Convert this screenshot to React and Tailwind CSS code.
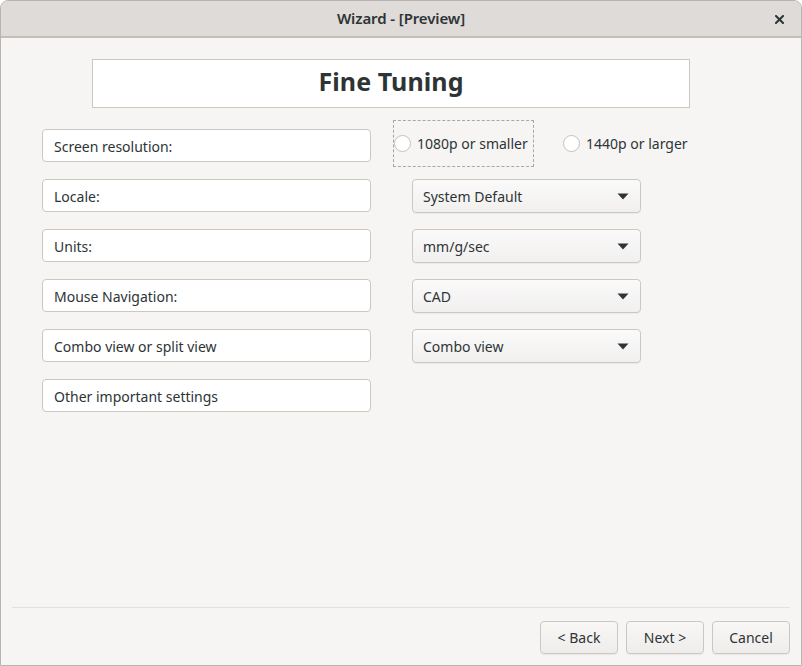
import React from "react";

const font = { fontFamily: '"Noto Sans", "Open Sans", sans-serif' };

function Label({ children }) {
  return (
    <div className="w-[329px] h-[33px] shrink-0 flex items-center pl-[11px] pt-[2px] bg-white border border-[#cdc7c2] rounded-[4px] text-[14px] text-[#2e3436]">
      {children}
    </div>
  );
}

function Combo({ children }) {
  return (
    <div className="ml-[41px] w-[229px] h-[34px] flex items-center justify-between pl-[10px] pr-[11px] rounded-[4px] border border-[#cdc7c2] bg-gradient-to-b from-[#fbfafa] to-[#f1f0ef] text-[14px] text-[#2e3436] shadow-[0_1px_0_rgba(0,0,0,0.04)]">
      <span>{children}</span>
      <svg width="12" height="7" viewBox="0 0 12 7">
        <path d="M0.5 0.5 L11.5 0.5 L6 6.5 Z" fill="#2e3436" />
      </svg>
    </div>
  );
}

function Radio() {
  return <span className="w-[17px] h-[17px] rounded-full bg-white border border-[#c4c0bc] shrink-0" />;
}

function Button({ children }) {
  return (
    <div className="w-[78px] h-[33px] flex items-center justify-center rounded-[4px] border border-[#cdc7c2] bg-gradient-to-b from-[#f8f7f6] to-[#eeedec] text-[14px] text-[#2e3436] shadow-[0_1px_0_rgba(0,0,0,0.05)]">
      {children}
    </div>
  );
}

export default function App() {
  return (
    <div style={font} className="w-[802px] h-[666px] flex flex-col bg-[#f6f5f4] border border-[#b7b4b1] rounded-t-[8px] overflow-hidden text-[#2e3436]">
      <div className="h-[37px] shrink-0 flex items-center justify-center relative bg-[#dedbd8] border-b-2 border-[#c2bfbb]">
        <span className="text-[15px] font-semibold tracking-[-0.1px] mt-[-1px]">Wizard - [Preview]</span>
        <svg className="absolute right-[17px] top-[14px]" width="9" height="9" viewBox="0 0 9 9">
          <path d="M1 1 L8 8 M8 1 L1 8" stroke="#2e3436" strokeWidth="2" strokeLinecap="square" />
        </svg>
      </div>
      <div className="flex-1 flex flex-col">
        <div className="mt-[21px] ml-[91px] w-[598px] h-[49px] bg-white border border-[#cdc7c2] flex items-center justify-center pb-[4px]">
          <span className="text-[25px] font-bold tracking-[0.1px]">Fine Tuning</span>
        </div>
        <div className="mt-[21px] ml-[41px] flex flex-col gap-[17px]">
          <div className="flex items-start h-[33px]">
            <Label>Screen resolution:</Label>
            <div className="ml-[22px] -mt-[9px] flex items-center">
              <div className="w-[141px] h-[47px] border border-dashed border-[#a9a6a3] flex items-center">
                <Radio />
                <span className="ml-[6px] text-[14px]">1080p or smaller</span>
              </div>
              <div className="ml-[29px] flex items-center">
                <Radio />
                <span className="ml-[6px] text-[14px]">1440p or larger</span>
              </div>
            </div>
          </div>
          <div className="flex items-start h-[33px]">
            <Label>Locale:</Label>
            <Combo>System Default</Combo>
          </div>
          <div className="flex items-start h-[33px]">
            <Label>Units:</Label>
            <Combo>mm/g/sec</Combo>
          </div>
          <div className="flex items-start h-[33px]">
            <Label>Mouse Navigation:</Label>
            <Combo>CAD</Combo>
          </div>
          <div className="flex items-start h-[33px]">
            <Label>Combo view or split view</Label>
            <Combo>Combo view</Combo>
          </div>
          <div className="flex items-start h-[33px]">
            <Label>Other important settings</Label>
          </div>
        </div>
        <div className="flex-1" />
        <div className="mx-[11px] h-px bg-[#e3e1de]" />
        <div className="flex justify-end gap-[8px] pr-[11px] pt-[13px] pb-[11px]">
          <Button>&lt; Back</Button>
          <Button>Next &gt;</Button>
          <Button>Cancel</Button>
        </div>
      </div>
    </div>
  );
}
